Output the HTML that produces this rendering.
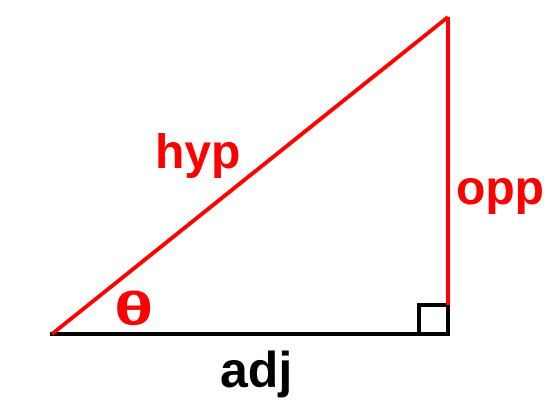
<!DOCTYPE html>
<html><head><style>html,body{margin:0;padding:0;background:#fff;}</style></head>
<body>
<svg width="550" height="400" viewBox="0 0 550 400" xmlns="http://www.w3.org/2000/svg">
<line x1="50" y1="334" x2="450" y2="334" stroke="#000" stroke-width="4"/>
<rect x="419" y="305" width="29" height="29" fill="none" stroke="#000" stroke-width="4"/>
<line x1="448" y1="17" x2="448" y2="305" stroke="#f00" stroke-width="4"/>
<line x1="52" y1="334" x2="448" y2="17" stroke="#f00" stroke-width="4"/>
<g font-family="Liberation Sans, sans-serif" font-weight="bold" font-size="48">
<text x="155" y="168" fill="#f00">hyp</text>
<text x="456" y="204" fill="#f00">opp</text>
<text x="0" y="0" fill="#f00" font-size="47" transform="translate(114,325) scale(1.55,1)">θ</text>
<text x="220" y="387" fill="#000" font-size="50">adj</text>
</g>
</svg>
</body></html>
